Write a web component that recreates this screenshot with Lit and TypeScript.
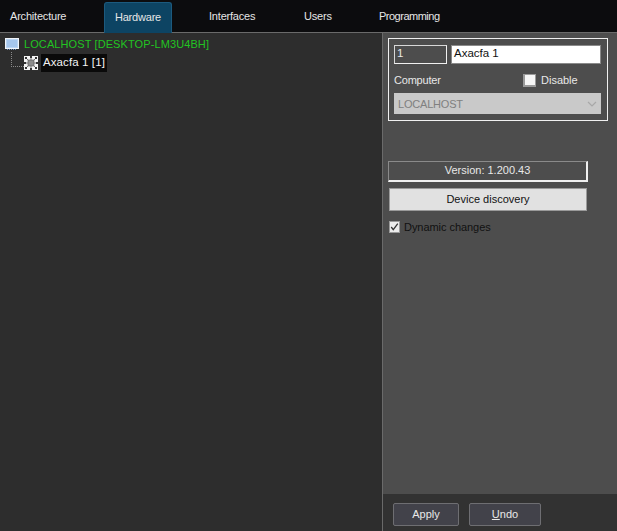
import { LitElement, html, css } from "lit";
import { customElement } from "lit/decorators.js";

@customElement("app-root")
export class AppRoot extends LitElement {
  static styles = css`
    :host { display: block; width: 617px; height: 531px; overflow: hidden; font-family: "Liberation Sans", Arial, sans-serif; font-size: 11px; color: #e8e8e8; }
    * { box-sizing: border-box; }
    .app { display: flex; flex-direction: column; height: 531px; background: #2d2d2d; }
    .tabs { display: flex; height: 33px; flex: none; background: #0c0c0e; border-bottom: 1px solid #6a6a6a; padding-top: 2px; }
    .tab { display: flex; align-items: center; height: 27px; color: #e6e6e6; white-space: nowrap; letter-spacing: -0.2px; }
    .t1 { margin-left: 10px; width: 94px; }
    .t2 { width: 68px; justify-content: center; background: #0d4463; border: 1px solid #1c5a7e; border-bottom: none; border-radius: 3px 3px 0 0; height: 31px; padding-bottom: 3px; }
    .t3 { margin-left: 37px; width: 95px; }
    .t4 { width: 75px; }
    .t5 { letter-spacing: -0.5px; }
    .main { flex: 1; display: flex; min-height: 0; }
    .tree { flex: none; padding: 2px 0 0 5px; border-right: 1px solid #6a6a6a; width: 383px; }
    .row { display: flex; align-items: center; height: 18px; }
    .root { color: #22c422; font-size: 11px; letter-spacing: 0.1px; gap: 5px; }
    .child { margin-left: 6px; height: 19px; }
    .dots { width: 13px; height: 15px; margin-top: -7px; border-left: 1px dotted #8a8a8a; border-bottom: 1px dotted #8a8a8a; flex: none; }
    .sel { background: #0a0a0a; color: #f4f4f4; font-size: 11.5px; padding: 0 2px; margin-left: 3px; height: 18px; line-height: 17px; letter-spacing: 0.1px; }
    .side { flex: 1; display: flex; flex-direction: column; background: #4d4d4d; min-width: 0; }
    .content { flex: 1; padding: 5px 9px 0 5px; }
    .group { height: 83px; width: 220px; border: 1px solid #f0f0f0; padding: 6px 6px 0 5px; }
    .line1 { display: flex; gap: 4px; height: 19px; }
    .id { width: 53px; border: 1px solid #e6e6e6; border-color: #d8d8d8 #f0f0f0 #f0f0f0 #d8d8d8; padding-left: 2px; line-height: 15px; font-size: 11.5px; color: #e8e8e8; }
    .name { width: 150px; background: #fff; border: 1px solid #8a8a8a; color: #111; padding-left: 2px; line-height: 15px; font-size: 11.5px; }
    .line2 { display: flex; align-items: center; height: 14px; margin-top: 9px; }
    .label { width: 129px; letter-spacing: -0.2px; }
    .cb { width: 13px; height: 13px; background: #f6f6f6; border: 2px solid #9a9a9a; border-top-width: 1px; border-right-width: 1px; flex: none; margin-right: 5px; }
    .select { display: flex; align-items: center; justify-content: space-between; height: 21px; width: 207px; margin-top: 6px; background: #c9c9c9; color: #808080; padding: 0 4px; letter-spacing: -0.2px; }
    .version { margin-top: 40px; width: 200px; height: 21px; border: 1px solid #8a8a8a; border-right: 2px solid #f0f0f0; border-bottom: 2px solid #f0f0f0; display: flex; align-items: center; justify-content: center; padding-bottom: 3px; }
    .disc { margin: 6px 0 0 1px; width: 198px; height: 23px; background: #e1e1e1; border: 1px solid #9a9a9a; color: #111; display: flex; align-items: center; justify-content: center; padding-bottom: 2px; }
    .dyn { display: flex; align-items: center; margin: 10px 0 0 1px; height: 12px; color: #111; gap: 4px; }
    .dyn span { margin-top: -1px; letter-spacing: -0.05px; }
    .cb2 { width: 11px; height: 12px; background: #ececec; border: 1px solid #9a9a9a; flex: none; display: block; }
    .foot { height: 37px; flex: none; background: #323232; display: flex; gap: 10px; padding: 9px 0 0 10px; }
    .btn { width: 66px; height: 23px; background: #42424a; border: 1px solid #6e6e72; border-radius: 2px; display: flex; align-items: center; justify-content: center; color: #e8e8e8; padding-bottom: 2px; }
    .undo { width: 72px; }
    u { text-decoration: underline; }
  `;

  render() {
    return html`<div class="app">
      <div class="tabs">
        <div class="tab t1">Architecture</div>
        <div class="tab t2">Hardware</div>
        <div class="tab t3">Interfaces</div>
        <div class="tab t4">Users</div>
        <div class="tab t5">Programming</div>
      </div>
      <div class="main">
        <div class="tree">
          <div class="row root">
            <svg width="14" height="12" viewBox="0 0 14 12"><rect x="0.5" y="0.5" width="13" height="10" fill="#b9d4f2" stroke="#f0f4fa"/><rect x="2" y="2" width="10" height="7" fill="#a5c6ec"/><path d="M2 11.5h10" stroke="#6f8fb8" stroke-dasharray="1 1"/></svg>
            <span>LOCALHOST [DESKTOP-LM3U4BH]</span>
          </div>
          <div class="row child">
            <div class="dots"></div>
            <svg width="14" height="14" viewBox="0 0 14 14"><rect width="14" height="14" fill="#f4f4f4"/><path d="M2 2l10 10M12 2L2 12M7 1v12M1 7h12" stroke="#777" stroke-width="1"/><rect x="4" y="4" width="6" height="6" fill="#8c8c8c" stroke="#555" stroke-width="0.6"/><path d="M1 1h2v2H1zM6 0h2v2H6zM11 1h2v2h-2zM0 6h2v2H0zM12 6h2v2h-2zM1 11h2v2H1zM6 12h2v2H6zM11 11h2v2h-2z" fill="#333"/></svg>
            <span class="sel">Axacfa 1 [1]</span>
          </div>
        </div>
        <div class="side">
          <div class="content">
            <div class="group">
              <div class="line1"><div class="id">1</div><div class="name">Axacfa 1</div></div>
              <div class="line2"><span class="label">Computer</span><span class="cb"></span><span>Disable</span></div>
              <div class="select"><span>LOCALHOST</span><svg width="10" height="6" viewBox="0 0 10 6"><path d="M1 1l4 4 4-4" fill="none" stroke="#a8a8a8" stroke-width="1.2"/></svg></div>
            </div>
            <div class="version">Version: 1.200.43</div>
            <div class="disc">Device discovery</div>
            <div class="dyn"><svg class="cb2" viewBox="0 0 11 12"><path d="M1.5 6l2.5 3.2L9.5 2" fill="none" stroke="#333" stroke-width="1.6"/></svg><span>Dynamic changes</span></div>
          </div>
          <div class="foot"><div class="btn">Apply</div><div class="btn undo"><span><u>U</u>ndo</span></div></div>
        </div>
      </div>
    </div>`;
  }
}
